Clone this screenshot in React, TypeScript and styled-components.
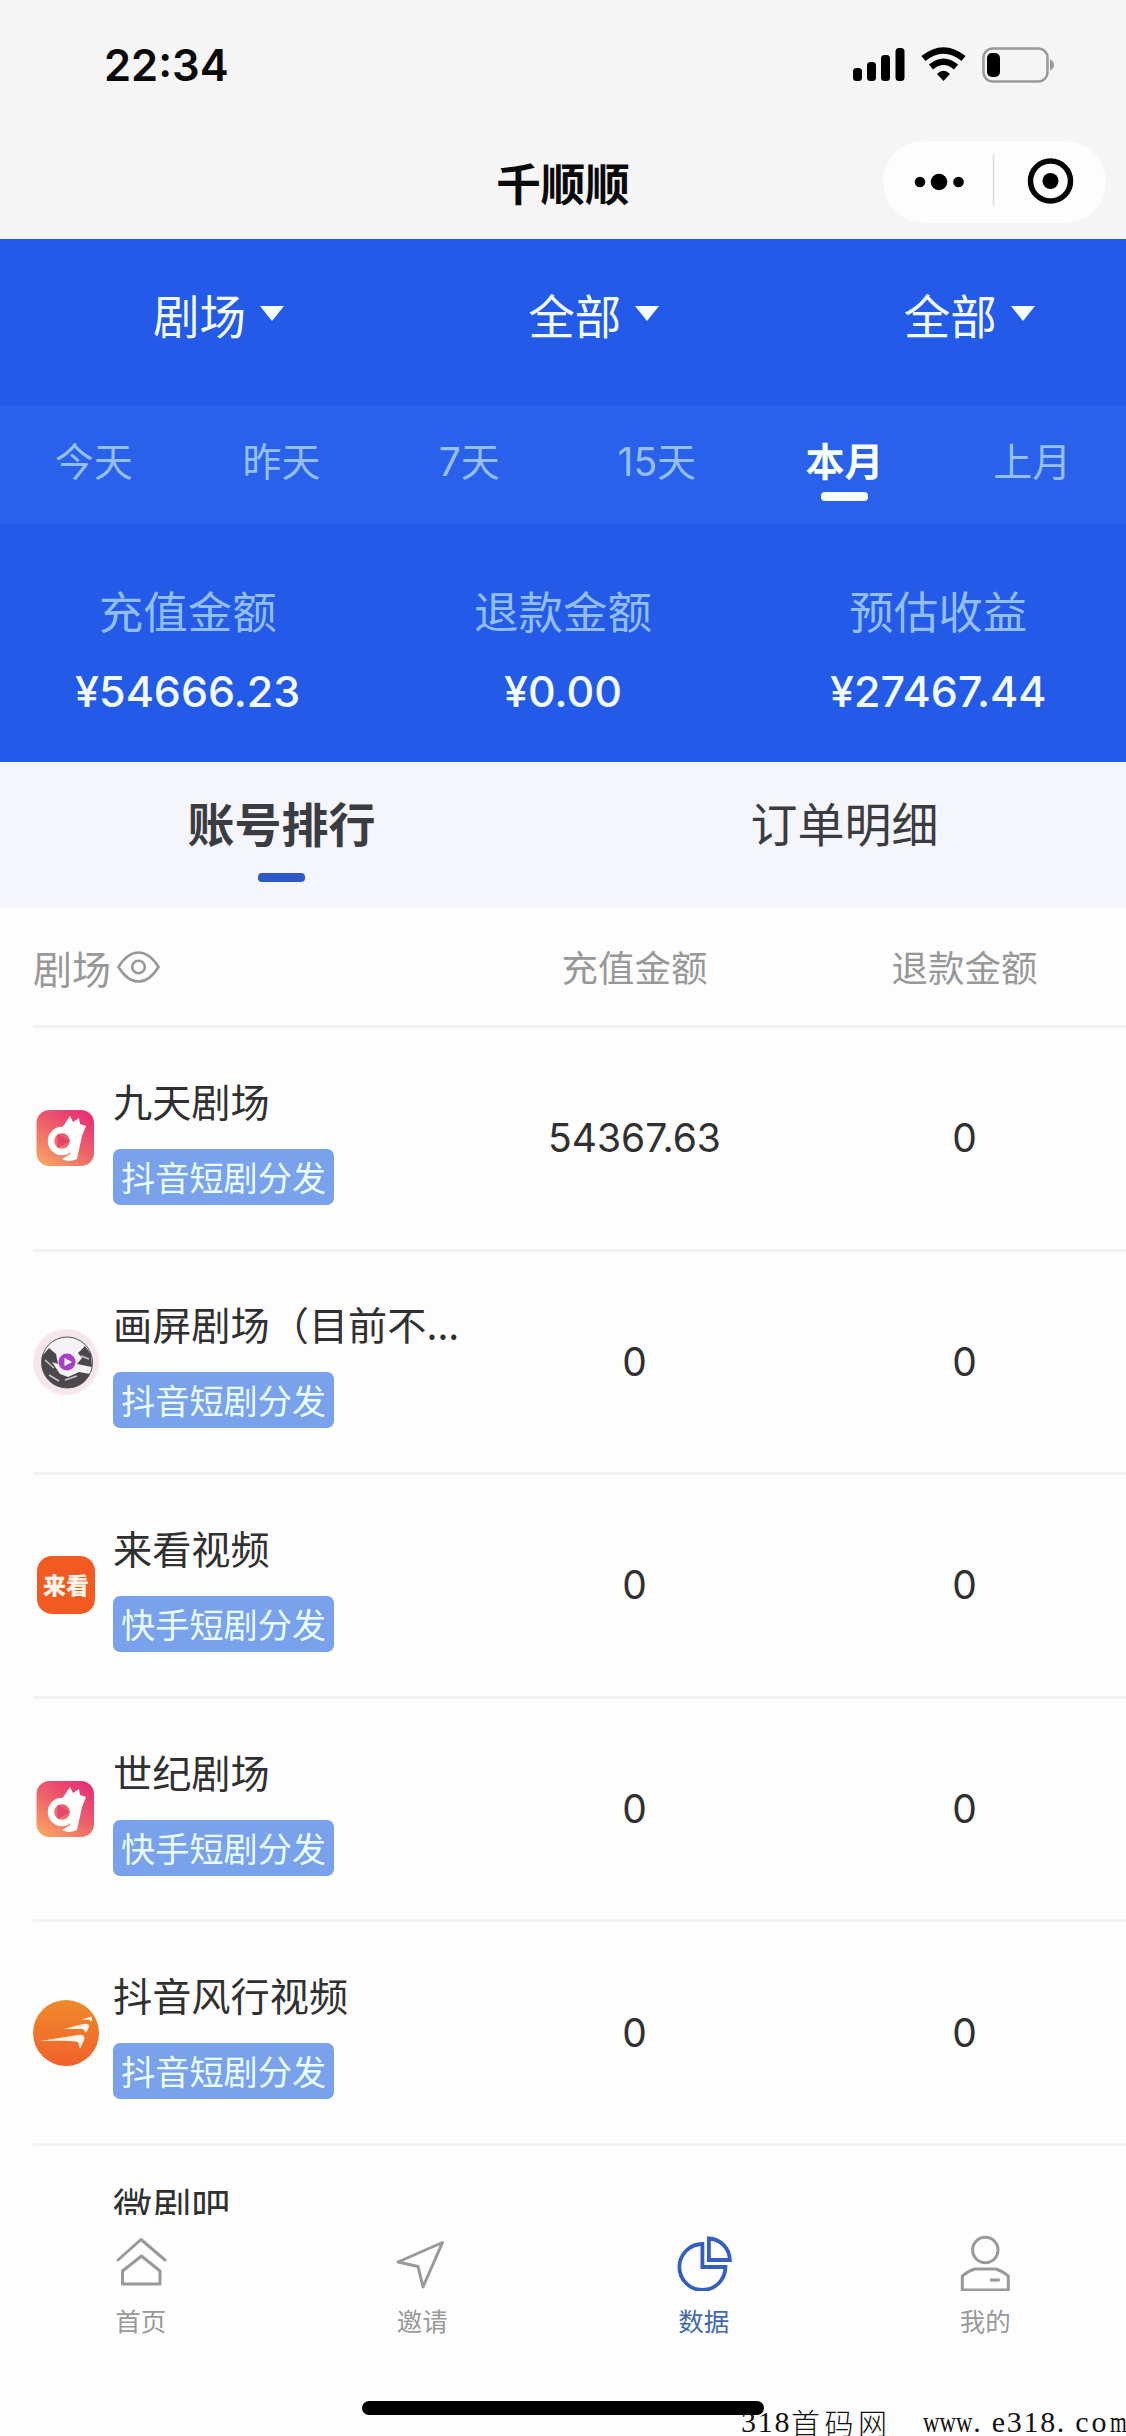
import React from "react";
import styled, { createGlobalStyle, css } from "styled-components";

const cjk = `"Noto Sans CJK SC", sans-serif`;

const Global = createGlobalStyle`
  * { box-sizing: border-box; }
  body { margin: 0; background: #fdfdfd; font-family: Inter, ${cjk}; }
`;

const Page = styled.div`
  position: relative;
  width: 1126px;
  height: 2436px;
  overflow: hidden;
  display: flex;
  flex-direction: column;
  background: #fdfdfd;
  color: #333;
`;

const TopArea = styled.header`
  height: 239px;
  flex: none;
  background: #f5f5f5;
`;

const StatusBar = styled.div`
  height: 125px;
  padding: 4px 72px 0 104px;
  display: flex;
  align-items: center;
  justify-content: space-between;
`;

const Clock = styled.span`
  font-size: 43.5px;
  font-weight: 600;
  color: #0a0a0a;
`;

const TitleBar = styled.div`
  height: 114px;
  display: grid;
  grid-template-columns: 1fr auto 1fr;
  align-items: center;
  padding: 0 20px;
`;

const Title = styled.h1`
  grid-column: 2;
  margin: 0;
  font: 700 44.5px/60px ${cjk};
  color: #0a0a0a;
`;

const Capsule = styled.div`
  justify-self: end;
  width: 223px;
  height: 82px;
  border-radius: 41px;
  background: #fdfdfd;
`;

const BluePanel = styled.section`
  flex: none;
  height: 523px;
  background: #245ae8;
  color: #f2fbff;
`;

const Filters = styled.div`
  height: 166px;
  display: grid;
  grid-template-columns: repeat(3, 1fr);
`;

const Filter = styled.button`
  border: 0;
  background: none;
  color: inherit;
  padding: 0 0 17px 153px;
  display: flex;
  align-items: center;
  gap: 14px;
  font: 400 46.5px/60px ${cjk};
`;

const Caret = styled.i`
  width: 0;
  height: 0;
  border: 12px solid transparent;
  border-top: 15px solid #f5ffff;
  border-bottom: 0;
`;

const Ranges = styled.div`
  height: 119px;
  display: grid;
  grid-template-columns: repeat(6, 1fr);
  background: #2a61ea;
`;

const Range = styled.button<{ $on?: boolean }>`
  border: 0;
  background: none;
  padding: 27px 0 0;
  display: flex;
  flex-direction: column;
  align-items: center;
  font: ${(p) => (p.$on ? 700 : 400)} 39px/60px Inter, ${cjk};
  color: ${(p) => (p.$on ? "#f7ffff" : "#94bff8")};
`;

const Marker = styled.i<{ $color: string }>`
  width: 47px;
  height: 9px;
  border-radius: 4px;
  background: ${(p) => p.$color};
`;

const Stats = styled.div`
  display: grid;
  grid-template-columns: repeat(3, 1fr);
  padding-top: 56px;
`;

const Stat = styled.div`
  display: flex;
  flex-direction: column;
  align-items: center;
`;

const StatLabel = styled.span`
  font: 400 44.5px/60px ${cjk};
  color: #92bef8;
`;

const StatValue = styled.strong`
  margin-top: 21px;
  font: 500 43px/60px Inter, ${cjk};
`;

const Tabs = styled.nav`
  flex: none;
  height: 146px;
  display: grid;
  grid-template-columns: 1fr 1fr;
  background: #f5f6fb;
`;

const Tab = styled.button<{ $on?: boolean }>`
  border: 0;
  background: none;
  padding: 30px 0 0;
  display: flex;
  flex-direction: column;
  align-items: center;
  gap: 21px;
  font: ${(p) => (p.$on ? 700 : 400)} 47px/60px ${cjk};
  color: #3b3c42;
`;

const List = styled.main`
  flex: none;
  height: 1307px;
  overflow: hidden;
  padding-left: 33px;
`;

const columns = css`
  display: grid;
  grid-template-columns: 433px 337px 1fr;
  align-items: center;
  border-bottom: 3px solid #f2f2f2;
`;

const HeadRow = styled.div`
  ${columns}
  height: 120px;
  color: #989898;
  font: 400 36.5px/50px ${cjk};
`;

const HeadFirst = styled.span`
  display: flex;
  align-items: center;
  gap: 6px;
  font-size: 39px;
`;

const Centered = styled.span`
  text-align: center;
`;

const Row = styled.div`
  ${columns}
  height: 223.6px;
`;

const Account = styled.div`
  display: flex;
  align-items: center;
  gap: 14px;
`;

const Logo = styled.svg`
  flex: none;
  width: 66px;
  height: 66px;
  overflow: visible;
`;

const AccountText = styled.div`
  display: flex;
  flex-direction: column;
  align-items: flex-start;
  gap: 19px;
  padding-bottom: 2px;
`;

const Name = styled.span`
  font: 400 39.2px/60px ${cjk};
  white-space: nowrap;
  color: #303030;
`;

const Tag = styled.span`
  height: 56px;
  padding: 0 8px;
  border-radius: 7px;
  background: #7aa1ec;
  color: #eaffff;
  font: 400 34.2px/55px ${cjk};
  white-space: nowrap;
`;

const Amount = styled.span`
  text-align: center;
  font: 400 39px/50px Inter, ${cjk};
  color: #303030;
`;

const BottomBar = styled.footer`
  flex: 1;
  padding-top: 16px;
  display: grid;
  grid-template-columns: repeat(4, 1fr);
  background: #fdfdfd;
`;

const NavItem = styled.button<{ $on?: boolean }>`
  border: 0;
  background: none;
  padding: 0;
  display: flex;
  flex-direction: column;
  align-items: center;
  justify-content: flex-start;
  gap: 9px;
  font: 400 25.5px/40px ${cjk};
  color: ${(p) => (p.$on ? "#3f6aa8" : "#999")};
`;

const HomeIndicator = styled.div`
  position: absolute;
  left: 362px;
  top: 2401px;
  width: 402px;
  height: 14px;
  border-radius: 7px;
  background: #000;
`;

const SiteMark = styled.div`
  position: absolute;
  left: 741px;
  top: 2402px;
  display: flex;
  white-space: pre;
  color: #111;
  font: 400 30px/40px "Liberation Serif", serif;
  letter-spacing: 1.7px;
`;

const MarkName = styled.span`
  font: 300 29px/40px ${cjk};
  letter-spacing: 4.4px;
  margin-right: 32px;
`;

const Squeezed = styled.span<{ $w: number; $s: number }>`
  width: ${(p) => p.$w}px;
  letter-spacing: 0;
  transform: scaleX(${(p) => p.$s});
  transform-origin: left;
`;

const Spread = styled.span`
  letter-spacing: 3px;
`;

const StatusIcons = () => (
  <svg width="202" height="36" viewBox="852 46 202 36">
    <rect x="853" y="67" width="9" height="13" rx="3.5" />
    <rect x="867" y="61" width="9" height="19" rx="3.5" />
    <rect x="881" y="54" width="9" height="26" rx="3.5" />
    <rect x="895.500" y="47" width="9" height="33" rx="3.5" />
    <g fill="none" stroke="#000" strokeWidth="6.500">
      <path d="M923.500 57.500 Q943.500 41.500 963.500 57.500" />
      <path d="M931 66 Q943.500 55.500 956 66" />
    </g>
    <path d="M943.500 80 L937 73 Q943.500 66.500 950 73 Z" />
    <rect x="983.500" y="47.500" width="64" height="33" rx="9" fill="none" stroke="#999" strokeWidth="2.500" />
    <rect x="987" y="52" width="13" height="24" rx="5" />
    <path d="M1050 58 Q1058 64 1050 70 Z" fill="#999" />
  </svg>
);

const CapsuleIcons = () => (
  <svg width="223" height="82" viewBox="883 141 223 82">
    <circle cx="920" cy="182" r="5.300" />
    <circle cx="939" cy="182" r="8.300" />
    <circle cx="958.500" cy="182" r="5.300" />
    <path d="M993.500 154 V206" stroke="#dcdcdc" strokeWidth="1.500" />
    <circle cx="1050.500" cy="181" r="20" fill="none" stroke="#050505" strokeWidth="5.500" />
    <circle cx="1050.500" cy="181" r="8" />
  </svg>
);

const Eye = () => (
  <svg width="43" height="34" viewBox="0 0 43 34" fill="none" stroke="#989898" strokeWidth="2.600">
    <path d="M1.500 17 C7 8 13 2.500 21.500 2.500 C30 2.500 36 8 41.500 17 C36 26 30 31.500 21.500 31.500 C13 31.500 7 26 1.500 17Z" />
    <circle cx="21.500" cy="17" r="6.300" />
  </svg>
);

const PlayLogo = ({ id }: { id: string }) => (
  <Logo viewBox="34 1108 66 66">
    <defs>
      <linearGradient id={id} x1="0.100" y1="1" x2="0.800" y2="0">
        <stop offset="0" stopColor="#f9a662" />
        <stop offset="0.500" stopColor="#ee6468" />
        <stop offset="1" stopColor="#e62f76" />
      </linearGradient>
    </defs>
    <rect x="37.500" y="1113" width="57.500" height="56" rx="13" fill={`url(#${id})`} />
    <circle cx="63" cy="1144" r="11" fill="none" stroke="#fff" strokeWidth="6.500" />
    <path d="M67 1125 L71 1119 L74 1125 L80 1121 L81 1127 L87 1129 L83 1139 L78 1162 Q70 1166 63 1162 L71 1157 L77 1140 L63 1131 Z" fill="#fff" />
    <path d="M58.500 1137 L71 1144 L58.500 1151Z" fill="#e5446f" />
  </Logo>
);

const InkLogo = () => (
  <Logo viewBox="34 1331 66 66">
    <circle cx="67" cy="1364" r="33" fill="#f7e6ec" />
    <circle cx="68" cy="1364.500" r="25.500" fill="#f4f2f4" stroke="#555" strokeWidth="1" />
    <g fill="#4b484d">
      <path d="M43 1358 L50 1350 L57 1356 L59 1366 L53 1364 L61 1376 L69 1379 L80 1374 L91 1376 Q84 1390 68 1390 Q49 1389 43 1370Z" />
      <path d="M92 1356 L86 1348 L79 1355 L83 1360 L78 1366 L93 1369Z" />
    </g>
    <g stroke="#c9c5ca" strokeWidth="1.500" fill="none">
      <path d="M46 1362 L55 1370 M50 1377 L60 1383 M66 1382 L78 1378 M82 1358 L90 1361" />
    </g>
    <circle cx="68" cy="1364" r="8.500" fill="#a83fcb" />
    <path d="M65.500 1360 L73 1364 L65.500 1368Z" fill="#fff" />
  </Logo>
);

const LaikanLogo = () => (
  <Logo viewBox="34 1554.500 66 66">
    <rect x="38" y="1558.500" width="58" height="58" rx="15" fill="#f25a22" />
    <text x="67" y="1596" textAnchor="middle" fontFamily="Noto Sans CJK SC" fontWeight="900" fontSize="23" fill="#fff5e8">来看</text>
  </Logo>
);

const WindLogo = () => (
  <Logo viewBox="34 2002 66 66">
    <defs>
      <linearGradient id="wind" x1="0" y1="0" x2="0" y2="1">
        <stop offset="0" stopColor="#ee8a2c" />
        <stop offset="1" stopColor="#f1602a" />
      </linearGradient>
    </defs>
    <circle cx="67" cy="2035" r="33" fill="url(#wind)" />
    <g fill="#fff4e4">
      <path d="M41 2043 L79 2037 Q87 2036 85 2042 L81 2051 L79 2044 Q70 2042 41 2043Z" />
      <path d="M65 2031 L84 2026 Q91 2025 90 2029 L87 2035 L84 2031 Z" />
      <path d="M82 2022 L92 2018.500 Q94 2020 92 2024 L90 2021.500Z" />
    </g>
  </Logo>
);

const HomeIcon = () => (
  <svg width="58" height="60" viewBox="112 2231 58 60" fill="none" stroke="#999" strokeWidth="3" strokeLinejoin="round" strokeLinecap="round">
    <path d="M118 2260 L141 2239.500 L165 2260" />
    <path d="M122.500 2284 V2271 L141.500 2256 L160 2271 V2284 Z" />
  </svg>
);

const InviteIcon = () => (
  <svg width="58" height="60" viewBox="393 2231 58 60" fill="none" stroke="#999" strokeWidth="3" strokeLinejoin="round">
    <path d="M398 2262 L442.500 2242.500 L423 2287 L418 2266.500 Z" />
  </svg>
);

const DataIcon = () => (
  <svg width="58" height="60" viewBox="674.600 2231 58 60" fill="none" stroke="#345fc0" strokeWidth="3.800">
    <path d="M702 2244 A23 23 0 1 0 725 2267 H702 Z" />
    <path d="M708.500 2238.500 V2260 H729.500 A22 22 0 0 0 708.500 2238.500 Z" />
  </svg>
);

const MeIcon = () => (
  <svg width="58" height="60" viewBox="956.200 2231 58 60" fill="none" stroke="#999" strokeWidth="3" strokeLinejoin="round">
    <circle cx="985.500" cy="2250" r="12.700" />
    <path d="M962.500 2290 V2276 Q968 2271 975 2269 H996 Q1003 2271 1008.500 2276 V2290 Z" />
    <path d="M990 2280 H1000" />
  </svg>
);

const stats = [
  ["充值金额", "¥54666.23"],
  ["退款金额", "¥0.00"],
  ["预估收益", "¥27467.44"],
];

const accounts = [
  { logo: <PlayLogo id="play1" />, name: "九天剧场", tag: "抖音短剧分发", paid: "54367.63" },
  { logo: <InkLogo />, name: "画屏剧场（目前不...", tag: "抖音短剧分发", paid: "0" },
  { logo: <LaikanLogo />, name: "来看视频", tag: "快手短剧分发", paid: "0" },
  { logo: <PlayLogo id="play2" />, name: "世纪剧场", tag: "快手短剧分发", paid: "0" },
  { logo: <WindLogo />, name: "抖音风行视频", tag: "抖音短剧分发", paid: "0" },
];

const LastRow = styled.div`
  padding: 28px 0 0 80px;
`;

export default function App() {
  return (
    <Page>
      <Global />
      <TopArea>
        <StatusBar>
          <Clock>22:34</Clock>
          <StatusIcons />
        </StatusBar>
        <TitleBar>
          <Title>千顺顺</Title>
          <Capsule>
            <CapsuleIcons />
          </Capsule>
        </TitleBar>
      </TopArea>
      <BluePanel>
        <Filters>
          {["剧场", "全部", "全部"].map((t, i) => (
            <Filter key={i}>
              {t}
              <Caret />
            </Filter>
          ))}
        </Filters>
        <Ranges>
          {["今天", "昨天", "7天", "15天", "本月", "上月"].map((t) => (
            <Range key={t} $on={t === "本月"}>
              {t}
              {t === "本月" && <Marker $color="#f5ffff" style={undefined} />}
            </Range>
          ))}
        </Ranges>
        <Stats>
          {stats.map(([label, value]) => (
            <Stat key={label}>
              <StatLabel>{label}</StatLabel>
              <StatValue>{value}</StatValue>
            </Stat>
          ))}
        </Stats>
      </BluePanel>
      <Tabs>
        <Tab $on>
          账号排行
          <Marker $color="#2d58c8" />
        </Tab>
        <Tab>订单明细</Tab>
      </Tabs>
      <List>
        <HeadRow>
          <HeadFirst>
            剧场
            <Eye />
          </HeadFirst>
          <Centered>充值金额</Centered>
          <Centered>退款金额</Centered>
        </HeadRow>
        {accounts.map((a) => (
          <Row key={a.name}>
            <Account>
              {a.logo}
              <AccountText>
                <Name>{a.name}</Name>
                <Tag>{a.tag}</Tag>
              </AccountText>
            </Account>
            <Amount>{a.paid}</Amount>
            <Amount>0</Amount>
          </Row>
        ))}
        <LastRow>
          <Name>微剧吧</Name>
        </LastRow>
      </List>
      <BottomBar>
        <NavItem>
          <HomeIcon />
          首页
        </NavItem>
        <NavItem>
          <InviteIcon />
          邀请
        </NavItem>
        <NavItem $on>
          <DataIcon />
          数据
        </NavItem>
        <NavItem>
          <MeIcon />
          我的
        </NavItem>
      </BottomBar>
      <HomeIndicator />
      <SiteMark>
        318
        <MarkName>首码网</MarkName>
        <Squeezed $w={50} $s={0.76}>www</Squeezed>
        <span>. </span>
        <span>e318</span>
        <span>. </span>
        <Spread>co</Spread>
        <Squeezed $w={17} $s={0.72}>m</Squeezed>
      </SiteMark>
    </Page>
  );
}
